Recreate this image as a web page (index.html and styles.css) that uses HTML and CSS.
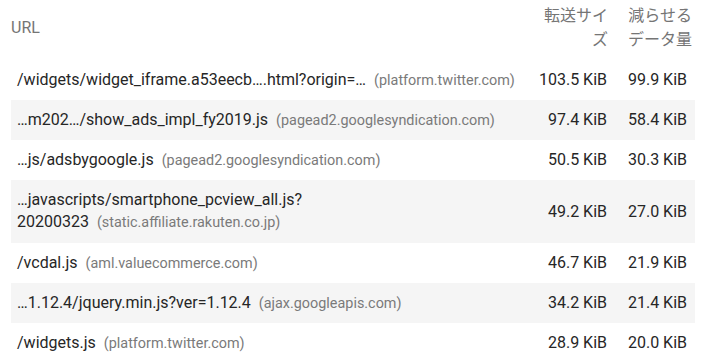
FILE: index.html
```html
<!DOCTYPE html>
<html lang="ja">
<head>
<meta charset="utf-8">
<title>Table</title>
<link rel="stylesheet" href="styles.css">
</head>
<body>
<table class="tbl">
  <colgroup>
    <col class="c-url">
    <col class="c-size">
    <col class="c-save">
  </colgroup>
  <thead>
    <tr>
      <th class="th-url">URL</th>
      <th class="th-num th-size">転送サイズ</th>
      <th class="th-num th-save">減らせるデータ量</th>
    </tr>
  </thead>
  <tbody>
    <tr>
      <td class="td-url">/widgets/widget_iframe.a53eecb….html?origin=…<span class="host">(platform.twitter.com)</span></td>
      <td class="td-num">103.5 KiB</td>
      <td class="td-num">99.9 KiB</td>
    </tr>
    <tr class="alt">
      <td class="td-url">…m202…/show_ads_impl_fy2019.js<span class="host">(pagead2.googlesyndication.com)</span></td>
      <td class="td-num">97.4 KiB</td>
      <td class="td-num">58.4 KiB</td>
    </tr>
    <tr>
      <td class="td-url">…js/adsbygoogle.js<span class="host">(pagead2.googlesyndication.com)</span></td>
      <td class="td-num">50.5 KiB</td>
      <td class="td-num">30.3 KiB</td>
    </tr>
    <tr class="alt">
      <td class="td-url td-wrap"><span class="path">…javascripts/smartphone_pcview_all.js?<br>20200323</span><span class="host">(static.affiliate.rakuten.co.jp)</span></td>
      <td class="td-num">49.2 KiB</td>
      <td class="td-num">27.0 KiB</td>
    </tr>
    <tr>
      <td class="td-url">/vcdal.js<span class="host">(aml.valuecommerce.com)</span></td>
      <td class="td-num">46.7 KiB</td>
      <td class="td-num">21.9 KiB</td>
    </tr>
    <tr class="alt">
      <td class="td-url">…1.12.4/jquery.min.js?ver=1.12.4<span class="host">(ajax.googleapis.com)</span></td>
      <td class="td-num">34.2 KiB</td>
      <td class="td-num">21.4 KiB</td>
    </tr>
    <tr>
      <td class="td-url">/widgets.js<span class="host">(platform.twitter.com)</span></td>
      <td class="td-num">28.9 KiB</td>
      <td class="td-num">20.0 KiB</td>
    </tr>
  </tbody>
</table>
</body>
</html>
```
FILE: styles.css
```css
html, body {
  margin: 0;
  padding: 0;
  background: #ffffff;
}

body {
  padding-left: 11px;
  font-family: Roboto, "Noto Sans CJK JP", sans-serif;
  color: #262626;
}

.tbl {
  border-collapse: collapse;
  table-layout: fixed;
  width: 684px;
}

.c-url { width: 514px; }
.c-size { width: 90px; }
.c-save { width: 80px; }

.tbl th {
  font-weight: 400;
  font-size: 16px;
  line-height: 24px;
  color: #757575;
  padding: 4px 0 8px 0;
  height: 48px;
  vertical-align: middle;
}

.th-url {
  text-align: left;
  padding-left: 0 !important;
}

.th-num {
  text-align: right;
}

.th-size {
  padding-left: 16px !important;
  padding-right: 7px !important;
}

.th-save {
  padding-left: 11px !important;
  padding-right: 3px !important;
}

.tbl td {
  font-size: 16px;
  line-height: 22px;
  height: 22px;
  padding: 9px 0;
  vertical-align: middle;
}

.td-url {
  padding-left: 6px !important;
  white-space: nowrap;
}

.td-wrap {
  padding-top: 9px !important;
  padding-bottom: 10px !important;
}

.td-num {
  text-align: right;
  padding-right: 8px !important;
  white-space: nowrap;
}

.alt td {
  background: #f5f5f5;
}

.host {
  margin-left: 8px;
  font-size: 14.4px;
  line-height: 16px;
  color: #7a7a7a;
}
```
